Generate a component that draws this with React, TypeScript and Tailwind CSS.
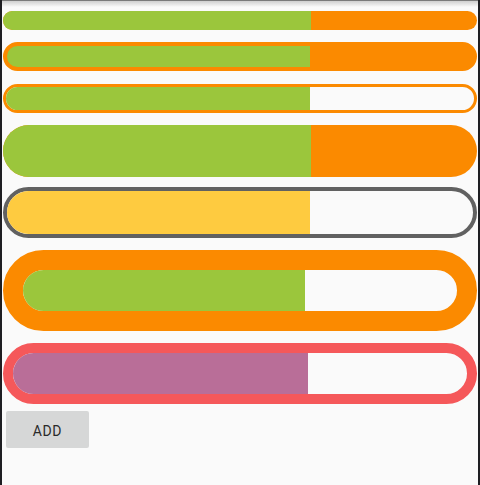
import React from "react";

type Bar = {
  h: string;
  frame: string;
  track: string;
  fill: string;
  progress: number;
};

const bars: Bar[] = [
  { h: "h-[19px]", frame: "", track: "bg-[#fb8a00]", fill: "bg-[#9bc63c]", progress: 65 },
  { h: "h-[29px]", frame: "border-4 border-[#fb8a00]", track: "bg-[#fb8a00]", fill: "bg-[#9bc63c]", progress: 65 },
  { h: "h-[29px]", frame: "border-[3px] border-[#fb8a00]", track: "bg-[#fafafa]", fill: "bg-[#9bc63c]", progress: 65 },
  { h: "h-[52px]", frame: "", track: "bg-[#fb8a00]", fill: "bg-[#9bc63c]", progress: 65 },
  { h: "h-[51px]", frame: "border-4 border-[#616161]", track: "bg-[#fafafa]", fill: "bg-[#fecb40]", progress: 65 },
  { h: "h-[81px]", frame: "border-[20px] border-[#fb8a00]", track: "bg-[#fafafa]", fill: "bg-[#9bc63c]", progress: 65 },
  { h: "h-[61px]", frame: "border-[10px] border-[#f5585a]", track: "bg-[#fafafa]", fill: "bg-[#b96e98]", progress: 65 },
];

// vertical gaps between the bars, top to bottom
const gaps = ["mt-[11px]", "mt-[12px]", "mt-[13px]", "mt-[12px]", "mt-[10px]", "mt-[12px]", "mt-[12px]"];

function ProgressBar({ bar, gap }: { bar: Bar; gap: string }) {
  return (
    <div className={`${gap} ${bar.h} rounded-full overflow-hidden ${bar.frame} ${bar.track}`}>
      <div className={`h-full ${bar.fill}`} style={{ width: `${bar.progress}%` }} />
    </div>
  );
}

export default function App() {
  return (
    <div
      className="w-[480px] h-[485px] flex bg-[#fafafa] overflow-hidden"
      style={{ fontFamily: "Roboto, 'Liberation Sans', sans-serif" }}
    >
      <div className="w-[2px] bg-[#1e1e22]" />
      <div className="relative flex-1 pl-[1px] pr-[1px]">
        <div className="absolute top-0 left-0 right-0 h-[7px] bg-gradient-to-b from-[#c8c8c8] to-[#fafafa]">
          <div className="h-[1px] bg-[#7a7a7a]" />
        </div>
        <div className="relative flex flex-col">
          {bars.map((b, i) => (
            <ProgressBar key={i} bar={b} gap={gaps[i]} />
          ))}
          <button className="mt-[7px] ml-[3px] w-[83px] h-[37px] pt-[3px] rounded-[2px] bg-[#d6d7d7] text-[14px] font-normal text-[#2a2a2a] tracking-[0.6px]">
            ADD
          </button>
        </div>
      </div>
      <div className="w-[2px] bg-[#1e1e22]" />
    </div>
  );
}
